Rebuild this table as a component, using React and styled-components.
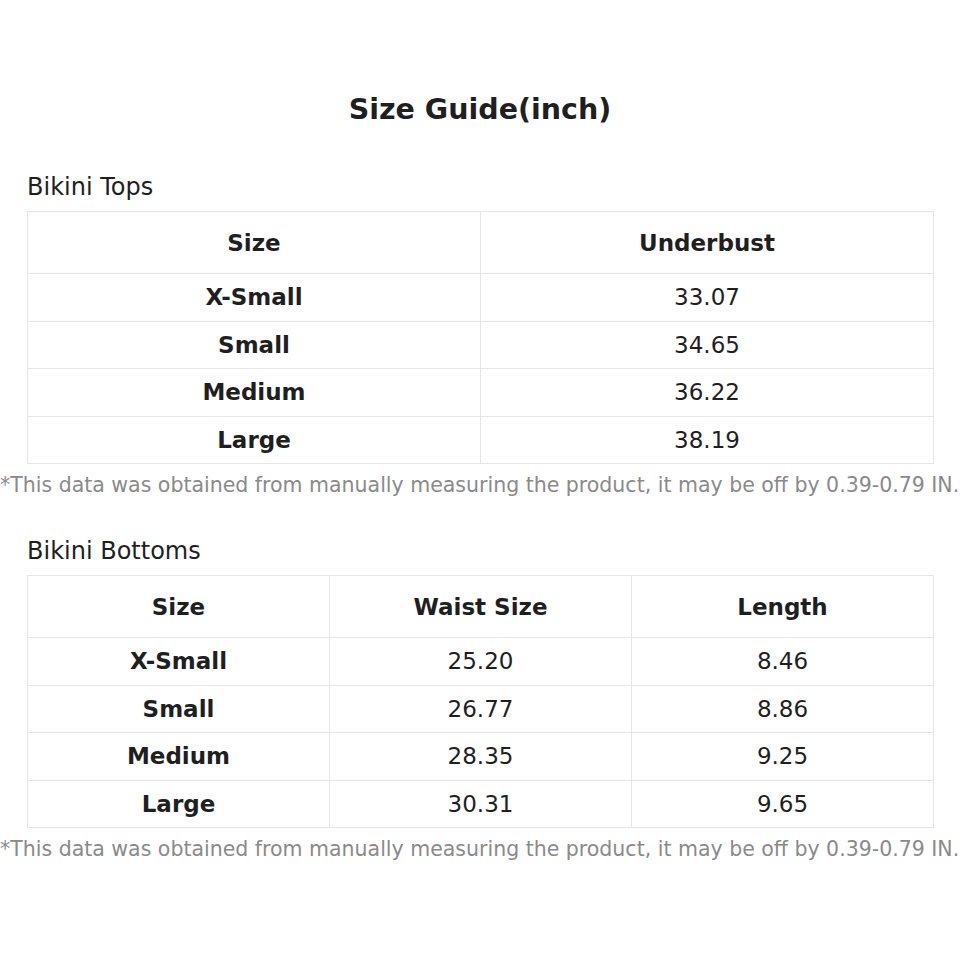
import React from "react";
import styled, { createGlobalStyle } from "styled-components";

const GlobalStyle = createGlobalStyle`
  body {
    margin: 0;
    background: #ffffff;
    font-family: "DejaVu Sans", "Liberation Sans", sans-serif;
    color: #1f1f1f;
  }
`;

const Page = styled.div`
  width: 960px;
  height: 960px;
  padding-top: 93px;
  box-sizing: border-box;
  overflow: hidden;
`;

const Title = styled.h1`
  margin: 0 0 47px;
  font-size: 28.5px;
  line-height: 34px;
  font-weight: 700;
  text-align: center;
`;

const Section = styled.section`
  margin-bottom: 41px;
`;

const Label = styled.h2`
  margin: 0 0 10px 27px;
  font-size: 24px;
  line-height: 27px;
  font-weight: 400;
`;

const Table = styled.table`
  margin-left: 27px;
  width: 907px;
  border-collapse: collapse;
  table-layout: fixed;
`;

const Cell = styled.td`
  border: 1px solid #e6e6e6;
  text-align: center;
  padding: 0;
  height: ${(p) => (p.$head ? "61px" : "46.5px")};
  font-size: 23px;
  font-weight: ${(p) => (p.$bold ? 700 : 400)};
  color: #1f1f1f;
`;

const Note = styled.p`
  margin: 9px 0 0;
  font-size: 20.5px;
  line-height: 24px;
  color: #8a8a8a;
  white-space: nowrap;
`;

const NOTE =
  "*This data was obtained from manually measuring the product, it may be off by 0.39-0.79 IN.";

const sections = [
  {
    label: "Bikini Tops",
    head: ["Size", "Underbust"],
    rows: [
      ["X-Small", "33.07"],
      ["Small", "34.65"],
      ["Medium", "36.22"],
      ["Large", "38.19"],
    ],
  },
  {
    label: "Bikini Bottoms",
    head: ["Size", "Waist Size", "Length"],
    rows: [
      ["X-Small", "25.20", "8.46"],
      ["Small", "26.77", "8.86"],
      ["Medium", "28.35", "9.25"],
      ["Large", "30.31", "9.65"],
    ],
  },
];

const SizeTable = ({ label, head, rows }) => (
  <Section>
    <Label>{label}</Label>
    <Table>
      <thead>
        <tr>
          {head.map((h) => (
            <Cell as="th" key={h} $head $bold>
              {h}
            </Cell>
          ))}
        </tr>
      </thead>
      <tbody>
        {rows.map((row) => (
          <tr key={row[0]}>
            {row.map((v, i) => (
              <Cell key={i} $bold={i === 0}>
                {v}
              </Cell>
            ))}
          </tr>
        ))}
      </tbody>
    </Table>
    <Note>{NOTE}</Note>
  </Section>
);

export default function App() {
  return (
    <Page>
      <GlobalStyle />
      <Title>Size Guide(inch)</Title>
      {sections.map((s) => (
        <SizeTable key={s.label} {...s} />
      ))}
    </Page>
  );
}
